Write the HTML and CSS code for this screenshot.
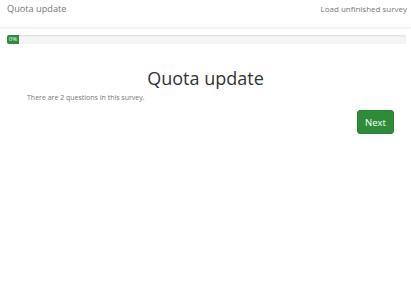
FILE: index.html
```html
<!DOCTYPE html>
<html lang="en">
<head>
    <meta charset="UTF-8">
    <meta name="viewport" content="width=device-width, initial-scale=1.0">
    <link rel="stylesheet" href="styles.css">
    <title>Quota update</title>
</head>

<body>
    <div class="navbar">
        <span class="brand">Quota update</span>
        <a class="nav-link" href="#">Load unfinished survey</a>
    </div>

    <div class="progress">
        <div class="progress-bar" style="width: 3%;">0%</div>
    </div>

    <div class="survey">
        <h1>Quota update</h1>
        <p class="question-count">There are 2 questions in this survey.</p>
        <div class="nav-buttons">
            <button class="btn-next">Next</button>
        </div>
    </div>
</body>
</html>
```

FILE: styles.css
```css
body {
    margin: 0;
    background-color: #fff;
    font-family: "Open Sans", "Liberation Sans", sans-serif;
    color: #333;
}
.navbar{
    display: flex;
    justify-content: space-between;
    align-items: flex-start;
    height: 24px;
    padding: 3px 4px 0 7px;
    line-height: 12px;
    box-shadow: 0 1px 2px rgba(0, 0, 0, 0.05);
    border-bottom: 1px solid #f0f0f0;
}
.brand{
    font-size: 9.2px;
    color: #777;
}
.nav-link{
    font-size: 8px;
    color: #777;
    text-decoration: none;
}
.progress{
    margin: 7px 5px 0 7px;
    height: 9px;
    background-color: #f5f5f5;
    border-radius: 2px;
    box-shadow: inset 0 1px 2px rgba(0, 0, 0, 0.1);
    overflow: hidden;
}
.progress-bar{
    height: 100%;
    min-width: 12px;
    background-color: #2e8b3a;
    color: #fff;
    font-size: 6px;
    line-height: 9px;
    text-align: center;
}
.survey{
    padding: 0 17px;
}
.survey > h1{
    margin: 24px 0 0 0;
    text-align: center;
    font-weight: 400;
    font-size: 18px;
    line-height: 20px;
    color: #333;
}
.question-count{
    margin: 5px 0 0 0;
    padding-left: 10px;
    font-size: 7px;
    line-height: 10px;
    color: #777;
}
.nav-buttons{
    display: flex;
    justify-content: flex-end;
    margin-top: 7px;
}
.btn-next{
    font-family: inherit;
    width: 37px;
    height: 24px;
    padding: 0;
    border: 1px solid #2a7f35;
    border-radius: 3px;
    background-color: #2e8b3a;
    color: #fff;
    font-size: 9.5px;
}
```
